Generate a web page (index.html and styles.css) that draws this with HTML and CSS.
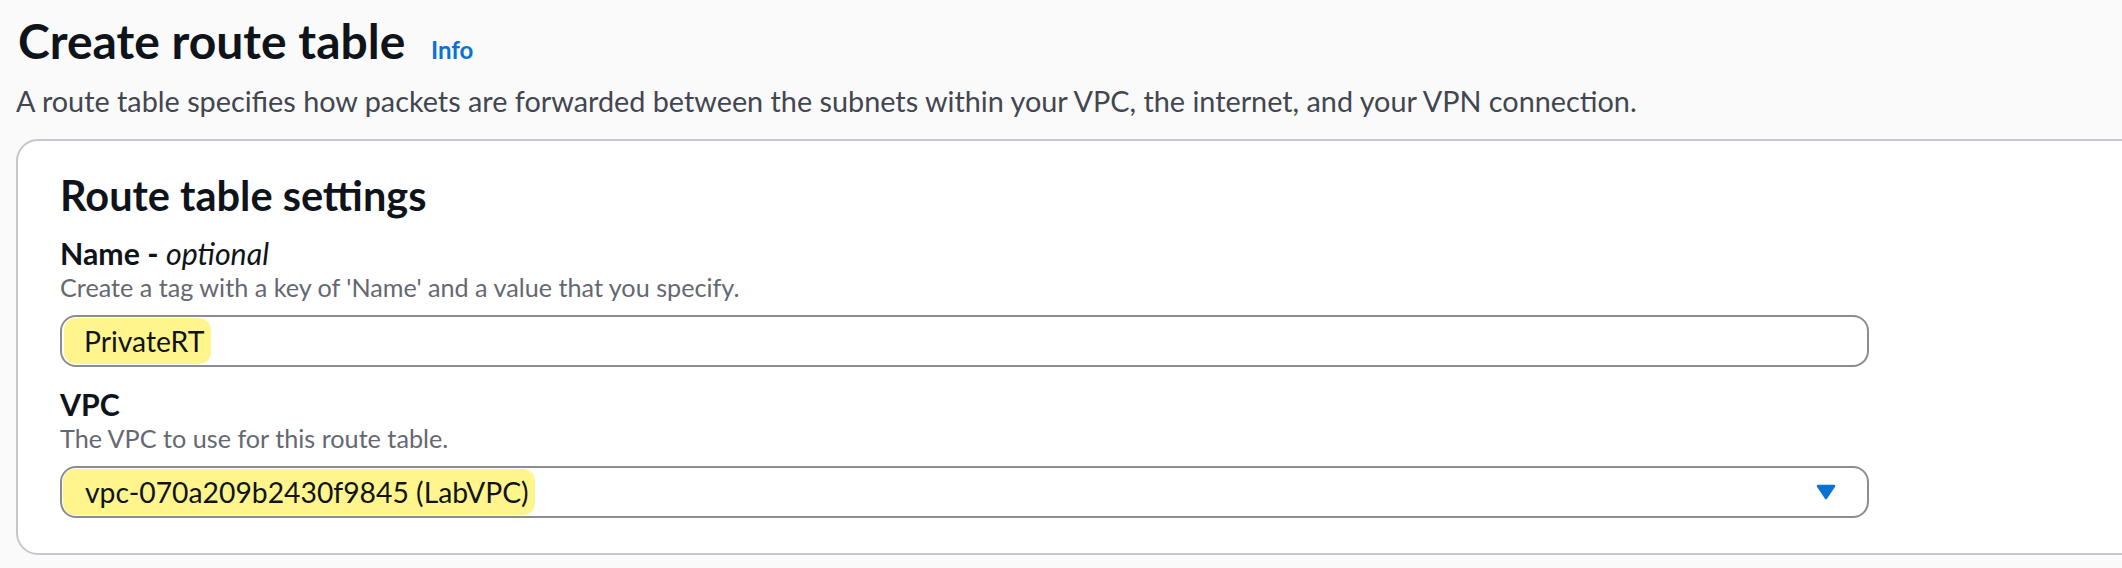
FILE: index.html
```html
<!DOCTYPE html>
<html lang="en">
<head>
<meta charset="utf-8">
<title>Create route table</title>
<link rel="stylesheet" href="styles.css">
</head>
<body>
<div class="page">
  <header class="page-header">
    <h1 class="title">Create route table <a class="info" href="#">Info</a></h1>
    <p class="page-desc">A route table specifies how packets are forwarded between the subnets within your VPC, the internet, and your VPN connection.</p>
  </header>
  <section class="card">
    <h2 class="card-title">Route table settings</h2>
    <div class="field">
      <div class="label">Name - <i>optional</i></div>
      <div class="hint">Create a tag with a key of 'Name' and a value that you specify.</div>
      <div class="control"><span class="hl hl-name">PrivateRT</span></div>
    </div>
    <div class="field">
      <div class="label">VPC</div>
      <div class="hint">The VPC to use for this route table.</div>
      <div class="control select"><span class="hl hl-vpc">vpc-070a209b2430f9845 (LabVPC)</span>
        <svg class="caret" width="20" height="16" viewBox="0 0 20 16"><polygon points="2,2 18,2 10,14" fill="#0972d3" stroke="#0972d3" stroke-width="2.5" stroke-linejoin="round"/></svg>
      </div>
    </div>
  </section>
</div>
</body>
</html>
```
FILE: styles.css
```css
html, body {
  margin: 0;
  padding: 0;
}
body {
  background: #fafafa;
  font-family: Lato, "Liberation Sans", sans-serif;
  color: #0f141a;
  overflow: hidden;
  width: 2122px;
  height: 568px;
}
.page {
  padding: 13px 0 0 16px;
}
.title {
  margin: 0;
  font-size: 48px;
  line-height: 56px;
  font-weight: 700;
  padding-left: 2px;
  color: #0f141a;
}
.info {
  font-size: 24px;
  font-weight: 700;
  color: #0972d3;
  text-decoration: none;
  margin-left: 14px;
}
.page-desc {
  margin: 5px 0 0 0;
  font-size: 28.8px;
  line-height: 36px;
  color: #424650;
}
.card {
  margin-top: 20px;
  width: 2300px;
  box-sizing: border-box;
  height: 416px;
  background: #ffffff;
  border: 2px solid #c6c6cd;
  border-radius: 22px;
  padding: 30px 0 0 42px;
}
.card-title {
  margin: 0;
  font-size: 41.5px;
  line-height: 48px;
  font-weight: 700;
}
.field {
  display: flex;
  flex-direction: column;
  margin-top: 16px;
}
.field + .field {
  margin-top: 19px;
}
.label {
  font-size: 30.3px;
  line-height: 36px;
  font-weight: 700;
}
.label i {
  font-weight: 400;
}
.hint {
  font-size: 25.2px;
  line-height: 32px;
  color: #656871;
}
.control {
  margin-top: 12px;
  width: 1809px;
  height: 52px;
  box-sizing: border-box;
  border: 2px solid #8c8c94;
  border-radius: 16px;
  display: flex;
  align-items: center;
  padding: 0 31px 0 2px;
  font-size: 28.3px;
}
.select {
  justify-content: space-between;
}
.hl {
  display: inline-flex;
  align-items: center;
  height: 46px;
  background: #fff58c;
  border-radius: 12px;
  padding: 0 7px 0 20px;
  color: #0f141a;
}
.hl-vpc {
  padding: 0 6px 0 22px;
  margin-left: -1px;
}
.caret {
  display: block;
}
```
